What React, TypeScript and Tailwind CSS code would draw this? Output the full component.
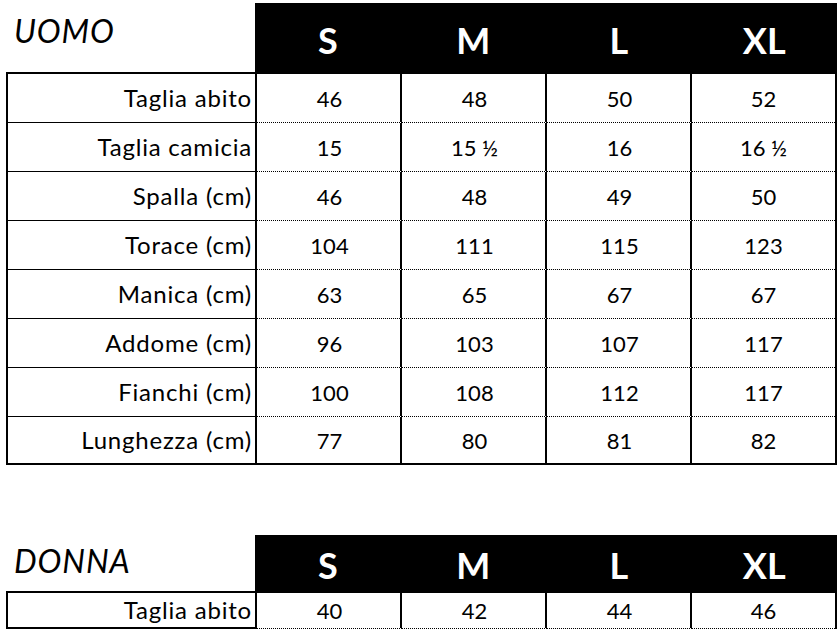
const sizes = ["S", "M", "L", "XL"];

const uomo = [
  ["Taglia abito", "46", "48", "50", "52"],
  ["Taglia camicia", "15", "15 ½", "16", "16 ½"],
  ["Spalla (cm)", "46", "48", "49", "50"],
  ["Torace (cm)", "104", "111", "115", "123"],
  ["Manica (cm)", "63", "65", "67", "67"],
  ["Addome (cm)", "96", "103", "107", "117"],
  ["Fianchi (cm)", "100", "108", "112", "117"],
  ["Lunghezza (cm)", "77", "80", "81", "82"],
];

const donna = [["Taglia abito", "40", "42", "44", "46"]];

const Header = ({ title, tall }: { title: string; tall: boolean }) => (
  <div className={`flex ${tall ? "h-[69px]" : "h-[56px]"}`}>
    <div className={`w-[249px] pl-[8px] text-[32px] leading-[32px] tracking-[0.9px] italic text-black ${tall ? "pt-[12px]" : "pt-[10px]"}`}>
      {title}
    </div>
    <div className="flex w-[582px] bg-black">
      {sizes.map((s) => (
        <div key={s} className={`flex flex-1 items-center justify-center text-[36px] leading-[36px] font-bold text-white ${tall ? "pt-[4px]" : "pt-[3px]"}`}>
          {s}
        </div>
      ))}
    </div>
  </div>
);

const Row = ({ cells, last, open }: { cells: string[]; last: boolean; open: boolean }) => {
  const h = open ? "h-[36px]" : last ? "h-[46px]" : "h-[49px]";
  const labelB = open ? "border-b-2 border-solid" : last ? "" : "border-b border-solid";
  const dataB = open || !last ? "border-b border-dotted" : "";
  return (
    <div className="flex">
      <div className={`flex w-[249px] ${h} items-center justify-end border-r-2 border-black pr-[3px] text-[24px] leading-[24px] tracking-[0.8px] ${labelB}`}>
        {cells[0]}
      </div>
      {cells.slice(1).map((c, i) => (
        <div
          key={i}
          className={`relative flex ${h} ${i < 3 ? "w-[145px]" : "w-[143px]"} items-center justify-center ${dataB} border-black`}
        >
          {i < 3 && <span className="absolute top-0 right-0 bottom-0 w-[2px] bg-black" />}
          <span className="pt-[1px]">{c}</span>
        </div>
      ))}
    </div>
  );
};

const Table = ({ rows, open }: { rows: string[][]; open?: boolean }) => (
  <div className={`w-[831px] border-black ${open ? "border-x-2 border-t-2" : "border-2"}`}>
    {rows.map((r, i) => (
      <Row key={i} cells={r} last={i === rows.length - 1} open={!!open} />
    ))}
  </div>
);

export default function App() {
  return (
    <div className="min-h-screen bg-white pt-[3px] pl-[6px] text-[22px] leading-[22px] text-black" style={{ fontFamily: "Lato, 'Open Sans', sans-serif" }}>
      <Header title="UOMO" tall />
      <Table rows={uomo} />
      <div className="h-[70px]" />
      <Header title="DONNA" tall={false} />
      <Table rows={donna} open />
    </div>
  );
}
